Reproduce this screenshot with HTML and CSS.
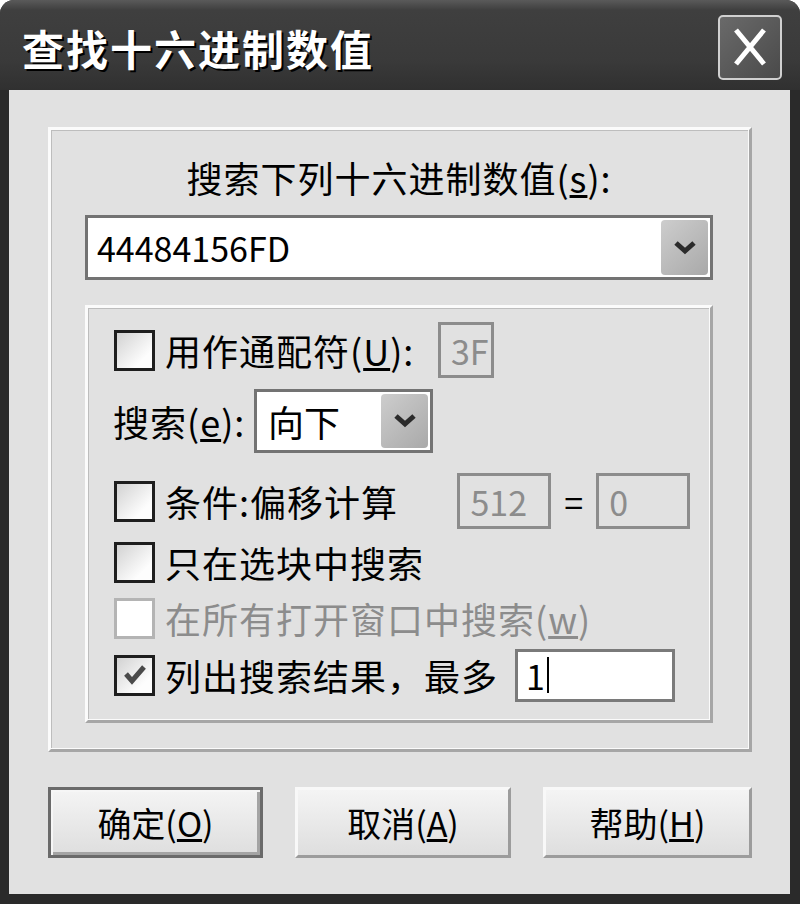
FILE: index.html
```html
<!DOCTYPE html>
<html lang="zh-CN">
<head>
    <meta charset="UTF-8">
    <meta name="viewport" content="width=device-width, initial-scale=1.0">
    <title>查找十六进制数值</title>
    <link rel="stylesheet" href="styles.css">
</head>
<body>

<div class="window">
    <div class="titlebar">
        <span class="title">查找十六进制数值</span>
        <div class="close-button">
            <svg width="40" height="44" viewBox="0 0 40 44">
                <path d="M6 5 L34 39 M34 5 L6 39" stroke="#fff" stroke-width="5" fill="none"/>
            </svg>
        </div>
    </div>

    <div class="client">
        <div class="group outer-group">
            <div class="caption">搜索下列十六进制数值(<u>s</u>):</div>

            <div class="combo combo-wide">
                <span class="combo-text">44484156FD</span>
                <span class="drop-button">
                    <svg width="24" height="16" viewBox="0 0 24 16">
                        <path d="M3 3 L12 11 L21 3" stroke="#2b2b2b" stroke-width="5" fill="none"/>
                    </svg>
                </span>
            </div>

            <div class="group inner-group">
                <div class="row row-wildcard">
                    <span class="checkbox"></span>
                    <span class="label label-wildcard">用作通配符(<u>U</u>):</span>
                    <span class="edit edit-disabled edit-hex">3F</span>
                </div>

                <div class="row row-direction">
                    <span class="label label-direction">搜索(<u>e</u>):</span>
                    <div class="combo combo-small">
                        <span class="combo-text">向下</span>
                        <span class="drop-button">
                            <svg width="24" height="16" viewBox="0 0 24 16">
                                <path d="M3 3 L12 11 L21 3" stroke="#2b2b2b" stroke-width="5" fill="none"/>
                            </svg>
                        </span>
                    </div>
                </div>

                <div class="row row-offset">
                    <span class="checkbox"></span>
                    <span class="label label-offset">条件:偏移计算</span>
                    <span class="edit edit-disabled edit-num">512</span>
                    <span class="equals">=</span>
                    <span class="edit edit-disabled edit-num">0</span>
                </div>

                <div class="row row-block">
                    <span class="checkbox"></span>
                    <span class="label">只在选块中搜索</span>
                </div>

                <div class="row row-allwin">
                    <span class="checkbox checkbox-disabled"></span>
                    <span class="label label-disabled">在所有打开窗口中搜索(<u>w</u>)</span>
                </div>

                <div class="row row-list">
                    <span class="checkbox checkbox-checked">
                        <svg width="26" height="26" viewBox="0 0 26 26">
                            <path d="M4 12 L10 19 L22 5" stroke="#4a4a4a" stroke-width="5" fill="none"/>
                        </svg>
                    </span>
                    <span class="label label-list">列出搜索结果，最多</span>
                    <span class="edit edit-max">1<span class="caret"></span></span>
                </div>
            </div>
        </div>

        <div class="buttons">
            <button class="btn btn-default">确定(<u>O</u>)</button>
            <button class="btn btn-cancel">取消(<u>A</u>)</button>
            <button class="btn btn-help">帮助(<u>H</u>)</button>
        </div>
    </div>
</div>

</body>
</html>
```

FILE: styles.css
```css
* {
    box-sizing: border-box;
}

body {
    margin: 0;
    padding: 0;
    background-color: #ffffff;
    font-family: "Noto Sans CJK SC", "DejaVu Sans", sans-serif;
}

.window {
    width: 800px;
    height: 904px;
    display: flex;
    flex-direction: column;
    background-color: #2a2a2a;
    border-radius: 14px 14px 0 0;
    overflow: hidden;
}

/* Title bar */
.titlebar {
    height: 90px;
    display: flex;
    align-items: center;
    justify-content: space-between;
    padding: 4px 18px 0 22px;
    background: linear-gradient(#5a5a5a 0px, #3f3f3f 10px, #3a3a3a 60px, #303030 90px);
}

.title {
    color: #ffffff;
    font-size: 42px;
    font-weight: bold;
    letter-spacing: 2px;
    text-shadow: 2px 2px 0 #000000;
}

.close-button {
    width: 64px;
    height: 65px;
    display: flex;
    justify-content: center;
    align-items: center;
    border: 2px solid #d0d0d0;
    border-radius: 5px;
    background: linear-gradient(135deg, #6a6a6a, #4a4a4a);
}

/* Client area */
.client {
    flex-grow: 1;
    margin: 0 10px 10px 9px;
    padding: 37px 38px 0 39px;
    background-color: #e1e1e1;
}

.group {
    border: 3px solid;
    border-color: #fbfbfb #a6a6a6 #a6a6a6 #fbfbfb;
    box-shadow: inset -1px -1px 0 #fbfbfb, inset 1px 1px 0 #bdbdbd;
}

.outer-group {
    height: 625px;
    padding: 25px 36px 26px 34px;
}

.caption {
    text-align: center;
    font-size: 36px;
    line-height: 44px;
    letter-spacing: 1px;
    margin-bottom: 16px;
}

/* Combo boxes */
.combo {
    display: flex;
    align-items: center;
    justify-content: space-between;
    background-color: #ffffff;
    border: 3px solid #737373;
    padding: 2px 2px 2px 9px;
}

.combo-wide {
    height: 65px;
}

.combo-text {
    font-size: 34px;
}

.drop-button {
    width: 47px;
    height: 100%;
    display: flex;
    justify-content: center;
    align-items: center;
    border-radius: 4px;
    background: linear-gradient(135deg, #cdcdcd, #a9a9a9);
}

.inner-group {
    height: 418px;
    margin-top: 25px;
    padding: 0 20px 0 26px;
}

/* Option rows */
.row {
    display: flex;
    align-items: center;
}

.row-wildcard {
    height: 56px;
    margin-top: 14px;
}

.row-direction {
    height: 64px;
    margin-top: 11px;
}

.row-offset {
    height: 58px;
    margin-top: 19px;
}

.row-block {
    height: 42px;
    margin-top: 11px;
}

.row-allwin {
    height: 42px;
    margin-top: 14px;
}

.row-list {
    height: 54px;
    margin-top: 9px;
}

.checkbox {
    width: 41px;
    height: 41px;
    flex-shrink: 0;
    display: flex;
    justify-content: center;
    align-items: center;
    border: 3px solid #1e1e1e;
    background: linear-gradient(135deg, #d2d2d2, #fdfdfd 75%);
    margin-right: 10px;
}

.checkbox-disabled {
    border-color: #b4b4b4;
    background: #ffffff;
}

.label {
    font-size: 36px;
    line-height: 1;
    letter-spacing: 1px;
    white-space: nowrap;
}

.label-wildcard {
    width: 273px;
}

.label-direction {
    width: 141px;
    margin-left: -1px;
}

.label-offset {
    width: 293px;
}

.label-list {
    width: 350px;
}

.label-disabled {
    color: #8c8c8c;
}

.combo-small {
    width: 179px;
    height: 64px;
    padding-left: 11px;
}

.combo-small .combo-text {
    font-size: 36px;
}

/* Edit fields */
.edit {
    display: flex;
    align-items: center;
    border: 3px solid #8c8c8c;
    font-size: 34px;
    padding-left: 10px;
}

.edit-disabled {
    color: #8c8c8c;
}

.edit-hex {
    width: 56px;
    height: 56px;
}

.edit-num {
    width: 94px;
    height: 56px;
}

.equals {
    width: 45px;
    text-align: center;
    font-size: 34px;
}

.edit-max {
    width: 160px;
    height: 53px;
    background-color: #ffffff;
    border-color: #7a7a7a;
    padding-left: 8px;
}

.caret {
    width: 2px;
    height: 36px;
    margin-left: 2px;
    background-color: #000000;
}

/* Bottom buttons */
.buttons {
    display: flex;
    gap: 32px;
    margin-top: 35px;
}

.btn {
    height: 71px;
    font-family: "Noto Sans CJK SC", "DejaVu Sans", sans-serif;
    font-size: 34px;
    color: #000000;
    padding: 0;
    border: 3px solid;
    border-color: #f8f8f8 #9c9c9c #9c9c9c #f8f8f8;
    background: linear-gradient(#f4f4f4, #dedede);
}

.btn-default {
    width: 215px;
    border-color: #6a6a6a;
    box-shadow: inset 2px 2px 0 #f6f6f6, inset -3px -3px 0 #a4a4a4;
}

.btn-cancel {
    width: 216px;
}

.btn-help {
    width: 209px;
}
```
